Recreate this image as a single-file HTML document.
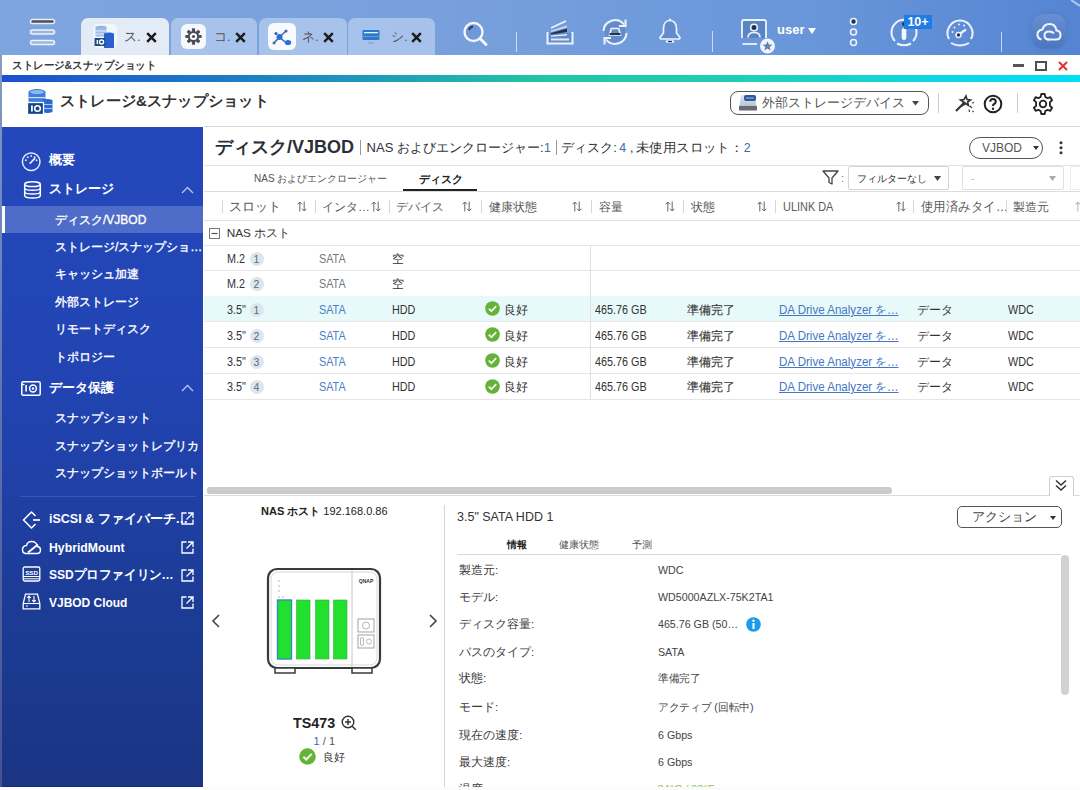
<!DOCTYPE html>
<html><head><meta charset="utf-8">
<style>
*{box-sizing:border-box}
html,body{margin:0;padding:0}
body{width:1080px;height:790px;overflow:hidden;position:relative;background:#fff;font-family:"Liberation Sans",sans-serif;color:#333}
.a{position:absolute}
.t{position:absolute;white-space:nowrap;line-height:20px;height:20px;transform-origin:0 50%}
#top{left:0;top:0;width:1080px;height:55px;background:linear-gradient(90deg,#7ea5df 0%,#78a0dc 40%,#6996da 75%,#5585d2 100%)}
.tab{position:absolute;top:18px;height:37px;border-radius:7px 7px 0 0;background:rgba(205,222,245,.55)}
.tab.act{background:#e3ebf6}
.tab .lb{position:absolute;top:9px;font-size:13px;line-height:20px;color:#555}
.tab .x{position:absolute;top:14px;width:11px;height:11px}
#wt{left:0;top:55px;width:1080px;height:20px;background:#fff}
#gl{left:0;top:75px;width:1080px;height:7px;background:linear-gradient(90deg,#1b4fd0 0%,#1d8fc0 30%,#22c4a4 50%,#1fcfb8 70%,#0ad8ec 90%,#02def2 100%)}
#ah{left:0;top:82px;width:1080px;height:45px;background:#fff}
#lb{left:0;top:55px;width:2px;height:732px;background:linear-gradient(180deg,#8a9cc0 0%,#7090c0 15%,#5a6aa8 60%,#4a5090 100%)}
#sb{left:2px;top:127px;width:201px;height:660px;background:linear-gradient(180deg,#2448bc 0%,#2244b2 40%,#1c3b94 75%,#193583 100%);border-bottom:1.5px solid #172c70}
.si{position:absolute;color:#fff;white-space:nowrap;line-height:20px;height:20px;transform-origin:0 50%}
.sh{font-size:13px;font-weight:bold;left:47px}
.ss{font-size:12px;left:53px;-webkit-text-stroke:0.35px #fff}
.chev{position:absolute;left:179px;width:13px;height:8px}
.ext{position:absolute;left:179px;width:13px;height:13px}
.vs{position:absolute;width:1px;background:#d6d6d6}
.hl{position:absolute;height:1px;background:#e6e6e6}
.bdg{position:absolute;width:14px;height:14px;border-radius:7px;background:#dbe6ef;color:#5a6a7a;font-size:10.5px;text-align:center;line-height:14px}
.lnk{text-decoration:underline}
</style></head><body>
<!-- TOP BAR -->
<div id="top" class="a">
  <svg class="a" style="left:28px;top:17px" width="29" height="30" viewBox="0 0 29 30">
    <rect x="2.5" y="2.5" width="24" height="4" rx="2" fill="#4a4f5a" stroke="#e8eef8" stroke-width="1.5"/>
    <rect x="2.5" y="13" width="24" height="4" rx="2" fill="#9fb6d8" stroke="#eef3fa" stroke-width="1.5"/>
    <rect x="2.5" y="23.5" width="24" height="4" rx="2" fill="#9fb6d8" stroke="#eef3fa" stroke-width="1.5"/>
  </svg>
  <div class="tab act" style="left:81px;width:88px">
    <svg class="a" style="left:12px;top:6px" width="24" height="24" viewBox="0 0 24 24">
      <rect x="0" y="0" width="24" height="24" rx="5" fill="#f2f5fa"/>
      <ellipse cx="8" cy="3.5" rx="5.5" ry="1.8" fill="#8fb0e0"/>
      <rect x="2.5" y="3.5" width="11" height="9" fill="#9cbbe6"/>
      <rect x="2.5" y="6.5" width="11" height="1" fill="#e6eefa"/>
      <rect x="2.5" y="9.5" width="11" height="1" fill="#e6eefa"/>
      <path d="M11 9.5 Q16 7.5 21 9.5 V25 H11Z" fill="#2a60cf"/>
      <rect x="1.5" y="14" width="11" height="8" fill="#1b4f8c"/>
      <rect x="3.6" y="16" width="1.5" height="4" fill="#fff"/>
      <circle cx="8.6" cy="18" r="2" fill="none" stroke="#fff" stroke-width="1.4"/>
    </svg>
    <div class="lb" style="left:43px">ス.</div>
    <svg class="x" style="left:65px" viewBox="0 0 11 11"><path d="M1.2 1.2L9.8 9.8M9.8 1.2L1.2 9.8" stroke="#1a1a1a" stroke-width="2.5"/></svg>
  </div>
  <div class="tab" style="left:171px;width:86px">
    <svg class="a" style="left:10px;top:6px" width="25" height="25" viewBox="0 0 25 25">
      <rect x="0" y="0" width="25" height="25" rx="6" fill="#f6f8fb"/>
      <g transform="translate(12.5 12.5)" fill="#4a4d55">
        <circle r="5.6"/>
        <rect x="-1.6" y="-8.2" width="3.2" height="16.4" rx="0.8"/>
        <rect x="-1.6" y="-8.2" width="3.2" height="16.4" rx="0.8" transform="rotate(45)"/>
        <rect x="-1.6" y="-8.2" width="3.2" height="16.4" rx="0.8" transform="rotate(90)"/>
        <rect x="-1.6" y="-8.2" width="3.2" height="16.4" rx="0.8" transform="rotate(135)"/>
      </g>
      <circle cx="12.5" cy="12.5" r="3.6" fill="#fff"/>
      <circle cx="12.5" cy="12.5" r="1.6" fill="#4a4d55"/>
    </svg>
    <div class="lb" style="left:43px">コ.</div>
    <svg class="x" style="left:64px" viewBox="0 0 11 11"><path d="M1.2 1.2L9.8 9.8M9.8 1.2L1.2 9.8" stroke="#1a1a1a" stroke-width="2.5"/></svg>
  </div>
  <div class="tab" style="left:259px;width:88px">
    <svg class="a" style="left:9px;top:5px" width="28" height="27" viewBox="0 0 28 27">
      <rect x="0" y="0" width="28" height="27" rx="6" fill="#f8fafd"/>
      <path d="M6 20L11.5 14L18 8M11.5 14L17 19" stroke="#3f6bb8" stroke-width="1.6"/>
      <circle cx="11.5" cy="14" r="3" fill="#2a6fd8"/>
      <circle cx="6" cy="20" r="1.5" fill="#4b6ea8"/>
      <circle cx="18" cy="8" r="1.6" fill="#4b6ea8"/>
      <circle cx="8" cy="10.5" r="1.5" fill="#2a5fb8"/>
      <ellipse cx="20" cy="19.5" rx="3.2" ry="2.6" fill="#2a6fd8"/>
    </svg>
    <div class="lb" style="left:43px">ネ.</div>
    <svg class="x" style="left:64px" viewBox="0 0 11 11"><path d="M1.2 1.2L9.8 9.8M9.8 1.2L1.2 9.8" stroke="#1a1a1a" stroke-width="2.5"/></svg>
  </div>
  <div class="tab" style="left:348px;width:87px">
    <svg class="a" style="left:14px;top:11px" width="18" height="16" viewBox="0 0 18 16">
      <rect x="0.5" y="1" width="17" height="10" rx="1" fill="#2f78c8"/>
      <rect x="2" y="3" width="14" height="1.3" fill="#d8f4ff"/>
      <rect x="1" y="7" width="16" height="1" fill="#5aa0e0"/>
      <rect x="6" y="13.5" width="6" height="1" fill="#8a9ab0"/>
    </svg>
    <div class="lb" style="left:43px">シ.</div>
    <svg class="x" style="left:63px" viewBox="0 0 11 11"><path d="M1.2 1.2L9.8 9.8M9.8 1.2L1.2 9.8" stroke="#1a1a1a" stroke-width="2.5"/></svg>
  </div>
  <!-- search -->
  <svg class="a" style="left:462px;top:21px" width="27" height="26" viewBox="0 0 27 26">
    <circle cx="11.5" cy="11" r="9" fill="#6f98d8" stroke="#f4f7fc" stroke-width="2.4"/>
    <path d="M7 9 A5 5 0 0 1 11 5.5" stroke="#2c3e60" stroke-width="2" fill="none"/>
    <path d="M18 17.5L24 23.5" stroke="#f4f7fc" stroke-width="3" stroke-linecap="round"/>
  </svg>
  <div class="a" style="left:516px;top:32px;width:1px;height:20px;background:rgba(235,242,252,.75)"></div>
  <!-- stack -->
  <svg class="a" style="left:545px;top:17px" width="30" height="29" viewBox="0 0 30 29">
    <rect x="3.5" y="16" width="23" height="10" fill="rgba(50,80,130,.22)"/>
    <path d="M2.5 15V26.5H27.5V15" stroke="#eef3fb" stroke-width="2" fill="none"/>
    <rect x="6" y="21.5" width="18" height="2" fill="#dfe8f6"/>
    <path d="M6 11L21 4" stroke="#eef3fb" stroke-width="1.8"/>
    <path d="M6 13.5L22 8.5V10.5L6 15Z" fill="#c9d6ea"/>
    <path d="M6 16L22 11.5V15L6 17.5Z" fill="#243152"/>
    <path d="M6 18.5L22 17V18.6L6 19.8Z" fill="#e8eef8"/>
  </svg>
  <!-- sync -->
  <svg class="a" style="left:599px;top:16px" width="32" height="32" viewBox="0 0 32 32">
    <circle cx="16" cy="16" r="10.5" fill="rgba(40,70,130,.18)"/>
    <path d="M4.5 15A11.5 11.5 0 0 1 25 8.5" stroke="#eef3fb" stroke-width="2" fill="none"/>
    <path d="M26.5 3.5V10H20" stroke="#eef3fb" stroke-width="2" fill="none"/>
    <path d="M27.5 17A11.5 11.5 0 0 1 7 23.5" stroke="#eef3fb" stroke-width="2" fill="none"/>
    <path d="M5.5 28.5V22H12" stroke="#eef3fb" stroke-width="2" fill="none"/>
    <path d="M10.5 19L12.3 12.5H19.7L21.5 19Z" fill="none" stroke="#eef3fb" stroke-width="1.7"/>
    <rect x="10.5" y="17" width="11" height="2" fill="#26324e"/>
  </svg>
  <!-- bell -->
  <svg class="a" style="left:657px;top:17px" width="26" height="28" viewBox="0 0 26 28">
    <path d="M13 3.5C8.5 3.5 6.5 7.5 6.5 11.5V16L3 20.5Q3 22 5 22H21Q23 22 23 20.5L19.5 16V11.5C19.5 7.5 17.5 3.5 13 3.5Z" fill="rgba(50,80,140,.18)" stroke="#eef3fb" stroke-width="1.7"/>
    <circle cx="13" cy="2.8" r="1.2" fill="#eef3fb"/>
    <path d="M10 24.5H16" stroke="#eef3fb" stroke-width="2.6" stroke-linecap="round"/>
    <path d="M11 24.5H15" stroke="#243152" stroke-width="1.2"/>
  </svg>
  <div class="a" style="left:712px;top:31px;width:1px;height:21px;background:rgba(235,242,252,.75)"></div>
  <!-- user -->
  <svg class="a" style="left:740px;top:18px" width="38" height="38" viewBox="0 0 38 38">
    <path d="M2 20V4Q2 2 4 2H24Q26 2 26 4V20" fill="rgba(40,70,130,.25)" stroke="#eef3fb" stroke-width="1.8"/>
    <circle cx="14" cy="9.5" r="3.3" fill="#243152" stroke="#eef3fb" stroke-width="1.6"/>
    <path d="M8 19.5Q8 14.5 14 14.5Q20 14.5 20 19.5" fill="none" stroke="#eef3fb" stroke-width="1.7"/>
    <path d="M2.5 26H17" stroke="#eef3fb" stroke-width="1.8"/>
    <circle cx="27.5" cy="28" r="7.5" fill="#f0f4fb"/>
    <path d="M27.5 23.2L28.9 26.5L32.4 26.7L29.7 29L30.6 32.4L27.5 30.5L24.4 32.4L25.3 29L22.6 26.7L26.1 26.5Z" fill="#5f7fb5"/>
  </svg>
  <div class="t" style="left:777px;top:20px;font-size:13px;font-weight:bold;color:#fff">user</div>
  <svg class="a" style="left:808px;top:28px" width="8" height="6" viewBox="0 0 8 6"><path d="M0 0H8L4 6Z" fill="#fff"/></svg>
  <!-- kebab -->
  <svg class="a" style="left:848px;top:17px" width="11" height="30" viewBox="0 0 11 30">
    <circle cx="5.5" cy="4.5" r="3" fill="#27324a" stroke="#eef3fb" stroke-width="1.6"/>
    <circle cx="5.5" cy="15" r="3" fill="none" stroke="#eef3fb" stroke-width="1.6"/>
    <circle cx="5.5" cy="25.5" r="3" fill="none" stroke="#eef3fb" stroke-width="1.6"/>
  </svg>
  <!-- info gauge -->
  <svg class="a" style="left:889px;top:16px" width="30" height="31" viewBox="0 0 30 31">
    <path d="M6 25A12.5 12.5 0 1 1 24 25" stroke="#eef3fb" stroke-width="2" fill="none"/>
    <path d="M8 27.5Q15 31 22 27.5" stroke="#eef3fb" stroke-width="2" fill="none"/>
    <rect x="12.7" y="12" width="4.6" height="12" rx="2.3" fill="#f4f7fc"/>
    <circle cx="15" cy="8" r="2" fill="#243152"/>
  </svg>
  <div class="a" style="left:904px;top:15px;width:28px;height:14px;background:#1f7be6;color:#fff;font-size:12.5px;font-weight:bold;line-height:14px;text-align:center">10+</div>
  <!-- speedometer -->
  <svg class="a" style="left:944px;top:17px" width="32" height="30" viewBox="0 0 32 30">
    <path d="M5 22A12.5 12.5 0 1 1 27 22" stroke="#eef3fb" stroke-width="2" fill="none"/>
    <path d="M7 26Q16 31 25 26" stroke="#eef3fb" stroke-width="2" fill="none"/>
    <g fill="#eef3fb"><circle cx="8.5" cy="15" r="1"/><circle cx="10.5" cy="10.5" r="1"/><circle cx="15" cy="7.5" r="1"/><circle cx="20" cy="8.5" r="1"/></g>
    <path d="M14 18L22 12.5" stroke="#eef3fb" stroke-width="2.2"/>
    <circle cx="14.5" cy="18" r="2.4" fill="#243152" stroke="#eef3fb" stroke-width="1.5"/>
  </svg>
  <div class="a" style="left:1001px;top:32px;width:1px;height:20px;background:rgba(235,242,252,.75)"></div>
  <!-- cloud -->
  <div class="a" style="left:1032px;top:14px;width:34px;height:35px;border-radius:12px;background:linear-gradient(180deg,#6890d2,#4b76c0);box-shadow:0 0 4px 1px rgba(80,120,190,.6)"></div>
  <svg class="a" style="left:1035px;top:21px" width="28" height="22" viewBox="0 0 28 22">
    <path d="M12 18.5H21Q25.5 18.5 25.5 14Q25.5 10 21.5 9.5Q20.5 3 14.5 3Q9 3 7.5 8.5Q2.5 9.5 2.5 13.5Q2.5 17.5 6.5 18.5" fill="none" stroke="#f2f6fc" stroke-width="2"/>
    <path d="M19 12.5Q17.5 10.5 14 10.5Q9.5 10.5 9.5 14.5Q9.5 18.5 14 18.5" fill="none" stroke="#f2f6fc" stroke-width="2"/>
  </svg>
  <svg class="a" style="left:1068px;top:0px" width="12" height="10" viewBox="0 0 12 10"><path d="M3 0L12 6" stroke="rgba(255,255,255,.55)" stroke-width="2"/></svg>
</div>

<!-- WINDOW TITLE -->
<div id="wt" class="a">
  <div class="t" style="left:12px;top:0px;font-size:11px;font-weight:bold;color:#3a3a3a;transform:scaleX(0.956)">ストレージ&amp;スナップショット</div>
  <div class="a" style="left:1013px;top:9px;width:11px;height:2.5px;background:#555"></div>
  <div class="a" style="left:1035px;top:6px;width:12px;height:10px;border:2.3px solid #505050"></div>
  <svg class="a" style="left:1058px;top:6px" width="10" height="10" viewBox="0 0 10 10"><path d="M1 1L9 9M9 1L1 9" stroke="#e0322c" stroke-width="2"/></svg>
</div>
<div id="gl" class="a"></div>

<!-- APP HEADER -->
<div id="ah" class="a">
  <svg class="a" style="left:26px;top:6px" width="28" height="27" viewBox="0 0 28 27">
    <ellipse cx="11" cy="4" rx="8.5" ry="3" fill="#3a78d8"/>
    <rect x="2.5" y="4" width="17" height="13" fill="#3f7edc"/>
    <ellipse cx="11" cy="4" rx="7" ry="2" fill="#8bb8f0"/>
    <rect x="2.5" y="9" width="17" height="1.2" fill="#cfe2fa"/>
    <path d="M16 12Q21 10 26.5 12V24Q21 26 16 24Z" fill="#2c6ad2"/>
    <rect x="16" y="16" width="10.5" height="1" fill="#a8c8f2"/>
    <rect x="16" y="20" width="10.5" height="1" fill="#a8c8f2"/>
    <rect x="1.5" y="14.5" width="16" height="12" fill="#17468c" stroke="#fff" stroke-width="1.3"/>
    <rect x="5" y="17.5" width="1.8" height="6" fill="#fff"/>
    <circle cx="11.5" cy="20.5" r="2.8" fill="none" stroke="#fff" stroke-width="1.6"/>
  </svg>
  <div class="t" style="left:60px;top:8px;height:22px;line-height:22px;font-size:15px;font-weight:bold;color:#333;transform:scaleX(1.014)">ストレージ&amp;スナップショット</div>
  <div class="a" style="left:730px;top:9px;width:199px;height:24px;border:1px solid #555;border-radius:8px"></div>
  <svg class="a" style="left:738px;top:12px" width="20" height="18" viewBox="0 0 20 18">
    <defs><linearGradient id="eg" x1="0" y1="0" x2="0" y2="1"><stop offset="0" stop-color="#dfe8f2"/><stop offset="1" stop-color="#b8c4d2"/></linearGradient></defs>
    <path d="M3 1H17L18.5 12H1.5Z" fill="url(#eg)"/>
    <rect x="6" y="1" width="12" height="6" rx="2" fill="#2a5a9a"/>
    <path d="M8 4H16" stroke="#9fc0e8" stroke-width="1"/>
    <rect x="1" y="12" width="18" height="4.5" fill="#6a6a70"/>
  </svg>
  <div class="t" style="left:762px;top:10.5px;font-size:13px;color:#555">外部ストレージデバイス</div>
  <svg class="a" style="left:912px;top:19px" width="7" height="4.5" viewBox="0 0 8 5"><path d="M0 0H8L4 5Z" fill="#444"/></svg>
  <div class="a" style="left:938px;top:11px;width:1px;height:20px;background:#ccc"></div>
  <svg class="a" style="left:953px;top:12px" width="22" height="20" viewBox="0 0 22 20">
    <path d="M3 17L12 8" stroke="#333" stroke-width="2.2"/>
    <path d="M13 2L14 5.5L17.5 6L14.5 8L15.5 11.5L12.5 9.5L9.5 11.5L10.5 8L7.5 6L11 5.5Z" fill="none" stroke="#333" stroke-width="1.6"/>
    <path d="M17 12L19 14M19 9L21 8.5M16 15.5L16.5 18M19.5 17L20.5 18" stroke="#333" stroke-width="1.2"/>
  </svg>
  <svg class="a" style="left:983px;top:12px" width="20" height="20" viewBox="0 0 20 20">
    <circle cx="10" cy="10" r="8.3" fill="none" stroke="#222" stroke-width="2"/>
    <path d="M7.2 7.8Q7.2 5 10 5Q12.8 5 12.8 7.5Q12.8 9.2 10.9 10.2Q10 10.7 10 12" fill="none" stroke="#222" stroke-width="2"/>
    <circle cx="10" cy="14.8" r="1.2" fill="#222"/>
  </svg>
  <div class="a" style="left:1017px;top:11px;width:1px;height:20px;background:#ccc"></div>
  <svg class="a" style="left:1031px;top:10px" width="24" height="24" viewBox="0 0 24 24">
    <path d="M10.3 2H13.7L14.3 4.9L16.6 6.2L19.4 5.2L21.1 8.2L18.9 10.1V13.9L21.1 15.8L19.4 18.8L16.6 17.8L14.3 19.1L13.7 22H10.3L9.7 19.1L7.4 17.8L4.6 18.8L2.9 15.8L5.1 13.9V10.1L2.9 8.2L4.6 5.2L7.4 6.2L9.7 4.9Z" fill="none" stroke="#222" stroke-width="1.8" stroke-linejoin="round"/>
    <circle cx="12" cy="12" r="3.3" fill="none" stroke="#222" stroke-width="1.8"/>
  </svg>
</div>
<div id="lb" class="a"></div>
<div id="sb" class="a">
  <!-- gauge icon -->
  <svg class="a" style="left:18px;top:24px" width="22" height="22" viewBox="0 0 22 22">
    <circle cx="11.2" cy="10.8" r="8.8" fill="none" stroke="#e4ebff" stroke-width="1.5"/>
    <g fill="#e4ebff"><circle cx="5.8" cy="9.3" r=".95"/><circle cx="7.8" cy="6.2" r=".95"/><circle cx="11.2" cy="5" r=".95"/><circle cx="14.6" cy="6.2" r=".95"/><circle cx="16.6" cy="9.3" r=".95"/></g>
    <path d="M10.2 12.2L14.6 7.6" stroke="#e4ebff" stroke-width="1.7" stroke-linecap="round"/>
  </svg>
  <div class="si sh" style="top:23px">概要</div>
  <!-- db icon -->
  <svg class="a" style="left:21px;top:54px" width="19" height="18" viewBox="0 0 19 18">
    <ellipse cx="9.5" cy="3.2" rx="7.8" ry="2.4" fill="none" stroke="#fff" stroke-width="1.5"/>
    <path d="M1.7 3.2V14.5Q1.7 17 9.5 17Q17.3 17 17.3 14.5V3.2" fill="none" stroke="#fff" stroke-width="1.5"/>
    <path d="M1.7 7Q1.7 9.3 9.5 9.3Q17.3 9.3 17.3 7M1.7 10.8Q1.7 13.1 9.5 13.1Q17.3 13.1 17.3 10.8" fill="none" stroke="#fff" stroke-width="1.5"/>
  </svg>
  <div class="si sh" style="top:52px">ストレージ</div>
  <svg class="chev" style="top:59px" viewBox="0 0 13 8"><path d="M1 7L6.5 1.5L12 7" fill="none" stroke="#b8c6ea" stroke-width="1.3"/></svg>
  <div class="a" style="left:0;top:79px;width:201px;height:27px;background:#4f6dc8"></div>
  <div class="a" style="left:0;top:79px;width:2.5px;height:27px;background:#fff"></div>
  <div class="si ss" style="top:82.5px">ディスク/VJBOD</div>
  <div class="si ss" style="top:109.5px">ストレージ/スナップショ…</div>
  <div class="si ss" style="top:137px">キャッシュ加速</div>
  <div class="si ss" style="top:165px">外部ストレージ</div>
  <div class="si ss" style="top:192px">リモートディスク</div>
  <div class="si ss" style="top:220px">トポロジー</div>
  <!-- snapshot icon -->
  <svg class="a" style="left:19px;top:253px" width="20" height="16" viewBox="0 0 20 16">
    <rect x="0.8" y="1.8" width="18.4" height="13.4" rx="1.5" fill="none" stroke="#fff" stroke-width="1.5"/>
    <path d="M0.8 4.5H3.5" stroke="#fff" stroke-width="1.3"/>
    <rect x="4.3" y="5" width="1.6" height="6.5" fill="#fff"/>
    <circle cx="12" cy="8.5" r="3.4" fill="none" stroke="#fff" stroke-width="1.5"/>
    <circle cx="12" cy="8.5" r="1.2" fill="#fff"/>
  </svg>
  <div class="si sh" style="top:251px">データ保護</div>
  <svg class="chev" style="top:257px" viewBox="0 0 13 8"><path d="M1 7L6.5 1.5L12 7" fill="none" stroke="#b8c6ea" stroke-width="1.3"/></svg>
  <div class="si ss" style="top:280.5px">スナップショット</div>
  <div class="si ss" style="top:308.5px">スナップショットレプリカ</div>
  <div class="si ss" style="top:336px">スナップショットボールト</div>
  <div class="a" style="left:18px;top:369px;width:176px;height:1px;background:#3b58b0"></div>
  <!-- iscsi -->
  <svg class="a" style="left:20px;top:384px" width="20" height="18" viewBox="0 0 20 18">
    <path d="M13.5 5L9.5 1L1.5 9L9.5 17L13.5 13" fill="none" stroke="#fff" stroke-width="1.6" stroke-linejoin="round"/>
    <path d="M11 9H18" stroke="#fff" stroke-width="1.7"/>
  </svg>
  <div class="si sh" style="top:382px;font-size:12.5px">iSCSI &amp; ファイバーチ…</div>
  <svg class="ext" style="top:385px" viewBox="0 0 13 13"><path d="M5.5 1H1V12H12V7.5" fill="none" stroke="#fff" stroke-width="1.3"/><path d="M7 1H12V6M12 1L5.5 7.5" fill="none" stroke="#fff" stroke-width="1.3"/></svg>
  <!-- hybrid -->
  <svg class="a" style="left:19px;top:413px" width="21" height="15" viewBox="0 0 21 15">
    <path d="M5 13.5H16Q19.5 13.5 19.5 10Q19.5 7 16.5 6.5Q15.5 1.5 10.5 1.5Q6.5 1.5 5.5 5.5Q1.5 6 1.5 9.5Q1.5 13.5 5 13.5Z" fill="none" stroke="#fff" stroke-width="1.4"/>
    <path d="M7 12.5L17 4.5" stroke="#fff" stroke-width="2"/>
  </svg>
  <div class="si sh" style="top:410.5px;font-size:12.5px;transform:scaleX(0.981)">HybridMount</div>
  <svg class="ext" style="top:414px" viewBox="0 0 13 13"><path d="M5.5 1H1V12H12V7.5" fill="none" stroke="#fff" stroke-width="1.3"/><path d="M7 1H12V6M12 1L5.5 7.5" fill="none" stroke="#fff" stroke-width="1.3"/></svg>
  <!-- ssd -->
  <svg class="a" style="left:20px;top:439px" width="19" height="16" viewBox="0 0 19 16">
    <rect x="1.2" y="1" width="16.6" height="14" rx="1.5" fill="none" stroke="#fff" stroke-width="1.3"/>
    <path d="M1.2 10.5H17.8M1.2 12.8H17.8" stroke="#fff" stroke-width="1"/>
    <text x="9.5" y="8.6" font-size="6.2" font-family="Liberation Sans" font-weight="bold" fill="#fff" text-anchor="middle">SSD</text>
  </svg>
  <div class="si sh" style="top:438px;font-size:12.5px;transform:scaleX(0.965)">SSDプロファイリン…</div>
  <svg class="ext" style="top:442px" viewBox="0 0 13 13"><path d="M5.5 1H1V12H12V7.5" fill="none" stroke="#fff" stroke-width="1.3"/><path d="M7 1H12V6M12 1L5.5 7.5" fill="none" stroke="#fff" stroke-width="1.3"/></svg>
  <!-- vjbod cloud -->
  <svg class="a" style="left:20px;top:466px" width="19" height="17" viewBox="0 0 19 17">
    <path d="M3.5 1.2H15.5L17.8 10.5V15.8H1.2V10.5Z" fill="none" stroke="#fff" stroke-width="1.3"/>
    <path d="M1.2 10.5H17.8" stroke="#fff" stroke-width="1.1"/>
    <path d="M7 9V3M5.2 4.8L7 3L8.8 4.8M12 3V9M10.2 7.2L12 9L13.8 7.2" fill="none" stroke="#fff" stroke-width="1.1"/>
    <path d="M4 13H6" stroke="#fff" stroke-width="1"/>
  </svg>
  <div class="si sh" style="top:465.5px;font-size:12.5px;transform:scaleX(0.957)">VJBOD Cloud</div>
  <svg class="ext" style="top:469px" viewBox="0 0 13 13"><path d="M5.5 1H1V12H12V7.5" fill="none" stroke="#fff" stroke-width="1.3"/><path d="M7 1H12V6M12 1L5.5 7.5" fill="none" stroke="#fff" stroke-width="1.3"/></svg>
</div>


<!-- MAIN -->

<div class="a" style="left:204px;top:127px;width:876px;height:660px;background:#fff"></div>
<div class="a" style="left:204px;top:126px;width:876px;height:1px;background:#d6d6d6"></div>
<div class="t" style="left:215px;top:136.75px;font-size:18px;color:#2b2f38;font-weight:bold">ディスク/VJBOD</div>
<div class="a" style="left:360px;top:140px;width:1px;height:15px;background:#999"></div>
<div class="t" style="left:366.6px;top:138.00px;font-size:13px;color:#333">NAS およびエンクロージャー:</div>
<div class="t" style="left:544px;top:138.00px;font-size:12.3px;color:#3a6aa8">1</div>
<div class="a" style="left:555.5px;top:140px;width:1px;height:15px;background:#999"></div>
<div class="t" style="left:561.2px;top:138.00px;font-size:13px;color:#333">ディスク:</div>
<div class="t" style="left:619.3px;top:138.00px;font-size:12.3px;color:#3a6aa8">4</div>
<div class="t" style="left:630px;top:138.00px;font-size:12.3px;color:#333">,</div>
<div class="t" style="left:636.3px;top:138.00px;font-size:13px;color:#333;transform:scaleX(1.03)">未使用スロット：</div>
<div class="t" style="left:743.7px;top:138.00px;font-size:12.3px;color:#3a6aa8">2</div>
<div class="a" style="left:969px;top:137px;width:74px;height:21.5px;border:1px solid #555;border-radius:11px"></div>
<div class="t" style="left:981.5px;top:137.50px;font-size:12.5px;color:#555;transform:scaleX(0.96)">VJBOD</div>
<svg class="a" style="left:1032.5px;top:146px" width="6" height="4" viewBox="0 0 6 4"><path d="M0 0H6L3 4Z" fill="#333"/></svg>
<svg class="a" style="left:1058.5px;top:140px" width="4" height="16" viewBox="0 0 4 16"><circle cx="2" cy="2.8" r="1.5" fill="#333"/><circle cx="2" cy="7.8" r="1.5" fill="#333"/><circle cx="2" cy="12.8" r="1.5" fill="#333"/></svg>
<div class="a" style="left:204px;top:164.5px;width:876px;height:1px;background:#e3e3e3"></div>
<div class="t" style="left:254px;top:169.00px;font-size:10px;color:#555">NAS およびエンクロージャー</div>
<div class="t" style="left:419px;top:169.00px;font-size:11px;color:#222;font-weight:bold">ディスク</div>
<div class="a" style="left:403px;top:189px;width:74px;height:3px;background:#222"></div>
<svg class="a" style="left:822px;top:170px" width="17" height="15" viewBox="0 0 17 15"><path d="M1 1H16L10 8V14L7 12.5V8Z" fill="none" stroke="#444" stroke-width="1.3" stroke-linejoin="round"/></svg>
<div class="t" style="left:841px;top:168.00px;font-size:11px;color:#777">:</div>
<div class="a" style="left:847.5px;top:166px;width:101px;height:24px;border:1px solid #d4d4d4;border-radius:2px"></div>
<div class="t" style="left:857px;top:169.00px;font-size:9.9px;color:#333">フィルターなし</div>
<svg class="a" style="left:934px;top:176px" width="7" height="5" viewBox="0 0 7 5"><path d="M0 0H7L3.5 5Z" fill="#444"/></svg>
<div class="a" style="left:962px;top:166px;width:102px;height:24px;border:1px solid #e0e0e0;border-radius:2px"></div>
<div class="t" style="left:971px;top:168.00px;font-size:11px;color:#bbb">-</div>
<svg class="a" style="left:1049px;top:176px" width="7" height="5" viewBox="0 0 7 5"><path d="M0 0H7L3.5 5Z" fill="#aaa"/></svg>
<div class="a" style="left:1070px;top:166px;width:10px;height:24px;border:1px solid #eee;border-right:none"></div>
<div class="a" style="left:204px;top:191px;width:876px;height:1px;background:#dcdcdc"></div>
<div class="vs" style="left:222px;top:200px;height:13px"></div>
<div class="t" style="left:229px;top:196.50px;font-size:13px;color:#5a5a5a">スロット</div>
<svg class="a" style="left:297px;top:201px" width="10" height="11" viewBox="0 0 10 11"><path d="M2.8 10.5V1M0.6 3.3L2.8 1L5 3.3M7.2 0.5V10M5 7.7L7.2 10L9.4 7.7" fill="none" stroke="#666" stroke-width="1"/></svg>
<div class="vs" style="left:314.5px;top:200px;height:13px"></div>
<div class="t" style="left:322px;top:196.50px;font-size:11.8px;color:#5a5a5a">インタ…</div>
<svg class="a" style="left:371px;top:201px" width="10" height="11" viewBox="0 0 10 11"><path d="M2.8 10.5V1M0.6 3.3L2.8 1L5 3.3M7.2 0.5V10M5 7.7L7.2 10L9.4 7.7" fill="none" stroke="#666" stroke-width="1"/></svg>
<div class="vs" style="left:388.5px;top:200px;height:13px"></div>
<div class="t" style="left:395.5px;top:196.50px;font-size:11.8px;color:#5a5a5a">デバイス</div>
<svg class="a" style="left:462px;top:201px" width="10" height="11" viewBox="0 0 10 11"><path d="M2.8 10.5V1M0.6 3.3L2.8 1L5 3.3M7.2 0.5V10M5 7.7L7.2 10L9.4 7.7" fill="none" stroke="#666" stroke-width="1"/></svg>
<div class="vs" style="left:481px;top:200px;height:13px"></div>
<div class="t" style="left:488.5px;top:196.50px;font-size:11.8px;color:#5a5a5a">健康状態</div>
<svg class="a" style="left:572px;top:201px" width="10" height="11" viewBox="0 0 10 11"><path d="M2.8 10.5V1M0.6 3.3L2.8 1L5 3.3M7.2 0.5V10M5 7.7L7.2 10L9.4 7.7" fill="none" stroke="#666" stroke-width="1"/></svg>
<div class="vs" style="left:591px;top:200px;height:13px"></div>
<div class="t" style="left:598.5px;top:196.50px;font-size:11.8px;color:#5a5a5a">容量</div>
<svg class="a" style="left:665px;top:201px" width="10" height="11" viewBox="0 0 10 11"><path d="M2.8 10.5V1M0.6 3.3L2.8 1L5 3.3M7.2 0.5V10M5 7.7L7.2 10L9.4 7.7" fill="none" stroke="#666" stroke-width="1"/></svg>
<div class="vs" style="left:682.5px;top:200px;height:13px"></div>
<div class="t" style="left:691px;top:196.50px;font-size:11.8px;color:#5a5a5a">状態</div>
<svg class="a" style="left:757px;top:201px" width="10" height="11" viewBox="0 0 10 11"><path d="M2.8 10.5V1M0.6 3.3L2.8 1L5 3.3M7.2 0.5V10M5 7.7L7.2 10L9.4 7.7" fill="none" stroke="#666" stroke-width="1"/></svg>
<div class="vs" style="left:774.5px;top:200px;height:13px"></div>
<div class="t" style="left:783.3px;top:196.50px;font-size:12.5px;color:#5a5a5a;transform:scaleX(0.874)">ULINK DA</div>
<svg class="a" style="left:896px;top:201px" width="10" height="11" viewBox="0 0 10 11"><path d="M2.8 10.5V1M0.6 3.3L2.8 1L5 3.3M7.2 0.5V10M5 7.7L7.2 10L9.4 7.7" fill="none" stroke="#666" stroke-width="1"/></svg>
<div class="vs" style="left:913px;top:200px;height:13px"></div>
<div class="t" style="left:921px;top:196.50px;font-size:12.5px;color:#5a5a5a;transform:scaleX(0.96)">使用済みタイ…</div>
<div class="vs" style="left:1005.5px;top:200px;height:13px"></div>
<div class="t" style="left:1013.3px;top:196.50px;font-size:11.8px;color:#5a5a5a">製造元</div>
<svg class="a" style="left:1075px;top:201px" width="5" height="11" viewBox="0 0 5 11"><path d="M2.8 10.5V1M0.6 3.3L2.8 1L5 3.3" fill="none" stroke="#bbb" stroke-width="1.1"/></svg>
<div class="a" style="left:204px;top:219.5px;width:876px;height:1px;background:#dedede"></div>
<svg class="a" style="left:208.5px;top:227.5px" width="11" height="11" viewBox="0 0 11 11"><rect x="0.5" y="0.5" width="10" height="10" fill="none" stroke="#777" stroke-width="1"/><path d="M2.5 5.5H8.5" stroke="#555" stroke-width="1.2"/></svg>
<div class="t" style="left:226.7px;top:223.00px;font-size:11.75px;color:#333">NAS ホスト</div>
<div class="a" style="left:204px;top:244.5px;width:876px;height:1px;background:#e6e6e6"></div>
<div class="t" style="left:226.5px;top:248.95px;font-size:12px;color:#333;transform:scaleX(0.9)">M.2</div>
<div class="bdg" style="left:249.5px;top:251.95px">1</div>
<div class="t" style="left:318.5px;top:248.95px;font-size:12px;color:#777;transform:scaleX(0.9)">SATA</div>
<div class="t" style="left:391.5px;top:248.95px;font-size:12px;color:#333">空</div>
<div class="a" style="left:204px;top:270.0px;width:876px;height:1px;background:#e6e6e6"></div>
<div class="t" style="left:226.5px;top:274.45px;font-size:12px;color:#333;transform:scaleX(0.9)">M.2</div>
<div class="bdg" style="left:249.5px;top:277.45px">2</div>
<div class="t" style="left:318.5px;top:274.45px;font-size:12px;color:#777;transform:scaleX(0.9)">SATA</div>
<div class="t" style="left:391.5px;top:274.45px;font-size:12px;color:#333">空</div>
<div class="a" style="left:204px;top:295.5px;width:876px;height:1px;background:#e6e6e6"></div>
<div class="a" style="left:204px;top:296px;width:876px;height:25.5px;background:#e8f9fa"></div>
<div class="t" style="left:226.5px;top:299.95px;font-size:12px;color:#333;transform:scaleX(0.9)">3.5"</div>
<div class="bdg" style="left:249.5px;top:302.95px">1</div>
<div class="t" style="left:318.5px;top:299.95px;font-size:12px;color:#4a80c4;transform:scaleX(0.9)">SATA</div>
<div class="t" style="left:391.5px;top:299.95px;font-size:12px;color:#333;transform:scaleX(0.9)">HDD</div>
<svg class="a" style="left:484.5px;top:301.34999999999997px" width="15" height="15" viewBox="0 0 15 15"><circle cx="7.5" cy="7.5" r="7.3" fill="#64b23a"/><path d="M3.8 7.6L6.4 10.2L11.2 5.2" fill="none" stroke="#eefae4" stroke-width="1.8"/></svg>
<div class="t" style="left:504px;top:299.95px;font-size:12px;color:#333">良好</div>
<div class="t" style="left:594.5px;top:299.95px;font-size:12px;color:#333;transform:scaleX(0.9)">465.76 GB</div>
<div class="t" style="left:686.5px;top:299.95px;font-size:12px;color:#333;-webkit-text-stroke:0.12px #333">準備完了</div>
<div class="t" style="left:779px;top:299.95px;font-size:12px;color:#4677c4;transform:scaleX(0.964);text-decoration:underline">DA Drive Analyzer を…</div>
<div class="t" style="left:916.5px;top:299.95px;font-size:12px;color:#333">データ</div>
<div class="t" style="left:1008px;top:299.95px;font-size:12px;color:#333;transform:scaleX(0.9)">WDC</div>
<div class="a" style="left:204px;top:321.0px;width:876px;height:1px;background:#e6e6e6"></div>
<div class="t" style="left:226.5px;top:325.70px;font-size:12px;color:#333;transform:scaleX(0.9)">3.5"</div>
<div class="bdg" style="left:249.5px;top:328.7px">2</div>
<div class="t" style="left:318.5px;top:325.70px;font-size:12px;color:#4a80c4;transform:scaleX(0.9)">SATA</div>
<div class="t" style="left:391.5px;top:325.70px;font-size:12px;color:#333;transform:scaleX(0.9)">HDD</div>
<svg class="a" style="left:484.5px;top:327.09999999999997px" width="15" height="15" viewBox="0 0 15 15"><circle cx="7.5" cy="7.5" r="7.3" fill="#64b23a"/><path d="M3.8 7.6L6.4 10.2L11.2 5.2" fill="none" stroke="#eefae4" stroke-width="1.8"/></svg>
<div class="t" style="left:504px;top:325.70px;font-size:12px;color:#333">良好</div>
<div class="t" style="left:594.5px;top:325.70px;font-size:12px;color:#333;transform:scaleX(0.9)">465.76 GB</div>
<div class="t" style="left:686.5px;top:325.70px;font-size:12px;color:#333;-webkit-text-stroke:0.12px #333">準備完了</div>
<div class="t" style="left:779px;top:325.70px;font-size:12px;color:#4677c4;transform:scaleX(0.964);text-decoration:underline">DA Drive Analyzer を…</div>
<div class="t" style="left:916.5px;top:325.70px;font-size:12px;color:#333">データ</div>
<div class="t" style="left:1008px;top:325.70px;font-size:12px;color:#333;transform:scaleX(0.9)">WDC</div>
<div class="a" style="left:204px;top:347.0px;width:876px;height:1px;background:#e6e6e6"></div>
<div class="t" style="left:226.5px;top:351.70px;font-size:12px;color:#333;transform:scaleX(0.9)">3.5"</div>
<div class="bdg" style="left:249.5px;top:354.7px">3</div>
<div class="t" style="left:318.5px;top:351.70px;font-size:12px;color:#4a80c4;transform:scaleX(0.9)">SATA</div>
<div class="t" style="left:391.5px;top:351.70px;font-size:12px;color:#333;transform:scaleX(0.9)">HDD</div>
<svg class="a" style="left:484.5px;top:353.09999999999997px" width="15" height="15" viewBox="0 0 15 15"><circle cx="7.5" cy="7.5" r="7.3" fill="#64b23a"/><path d="M3.8 7.6L6.4 10.2L11.2 5.2" fill="none" stroke="#eefae4" stroke-width="1.8"/></svg>
<div class="t" style="left:504px;top:351.70px;font-size:12px;color:#333">良好</div>
<div class="t" style="left:594.5px;top:351.70px;font-size:12px;color:#333;transform:scaleX(0.9)">465.76 GB</div>
<div class="t" style="left:686.5px;top:351.70px;font-size:12px;color:#333;-webkit-text-stroke:0.12px #333">準備完了</div>
<div class="t" style="left:779px;top:351.70px;font-size:12px;color:#4677c4;transform:scaleX(0.964);text-decoration:underline">DA Drive Analyzer を…</div>
<div class="t" style="left:916.5px;top:351.70px;font-size:12px;color:#333">データ</div>
<div class="t" style="left:1008px;top:351.70px;font-size:12px;color:#333;transform:scaleX(0.9)">WDC</div>
<div class="a" style="left:204px;top:373.0px;width:876px;height:1px;background:#e6e6e6"></div>
<div class="t" style="left:226.5px;top:377.45px;font-size:12px;color:#333;transform:scaleX(0.9)">3.5"</div>
<div class="bdg" style="left:249.5px;top:380.45px">4</div>
<div class="t" style="left:318.5px;top:377.45px;font-size:12px;color:#4a80c4;transform:scaleX(0.9)">SATA</div>
<div class="t" style="left:391.5px;top:377.45px;font-size:12px;color:#333;transform:scaleX(0.9)">HDD</div>
<svg class="a" style="left:484.5px;top:378.84999999999997px" width="15" height="15" viewBox="0 0 15 15"><circle cx="7.5" cy="7.5" r="7.3" fill="#64b23a"/><path d="M3.8 7.6L6.4 10.2L11.2 5.2" fill="none" stroke="#eefae4" stroke-width="1.8"/></svg>
<div class="t" style="left:504px;top:377.45px;font-size:12px;color:#333">良好</div>
<div class="t" style="left:594.5px;top:377.45px;font-size:12px;color:#333;transform:scaleX(0.9)">465.76 GB</div>
<div class="t" style="left:686.5px;top:377.45px;font-size:12px;color:#333;-webkit-text-stroke:0.12px #333">準備完了</div>
<div class="t" style="left:779px;top:377.45px;font-size:12px;color:#4677c4;transform:scaleX(0.964);text-decoration:underline">DA Drive Analyzer を…</div>
<div class="t" style="left:916.5px;top:377.45px;font-size:12px;color:#333">データ</div>
<div class="t" style="left:1008px;top:377.45px;font-size:12px;color:#333;transform:scaleX(0.9)">WDC</div>
<div class="a" style="left:204px;top:398.5px;width:876px;height:1px;background:#e6e6e6"></div>
<div class="a" style="left:590px;top:245px;width:1px;height:154px;background:#e0e0e0"></div>
<div class="a" style="left:207px;top:487px;width:685px;height:7px;border-radius:2px 3.5px 3.5px 2px;background:#cbcbcb"></div>
<div class="a" style="left:204px;top:495px;width:876px;height:1px;background:#dcdcdc"></div>
<div class="a" style="left:1048.5px;top:476px;width:25px;height:20px;border:1px solid #cfcfcf;border-bottom:none;border-radius:3px 3px 0 0;background:#fff"></div>
<svg class="a" style="left:1054px;top:479px" width="14" height="13" viewBox="0 0 14 13"><path d="M2 1.5L7 6L12 1.5M2 6.5L7 11L12 6.5" fill="none" stroke="#333" stroke-width="1.5"/></svg>
<div class="t" style="left:261px;top:500.50px;font-size:11px;color:#222"><b>NAS ホスト</b> 192.168.0.86</div>
<div class="a" style="left:444px;top:505px;width:1px;height:285px;background:#d4d4d4"></div>
<div class="t" style="left:457px;top:506.50px;font-size:12.5px;color:#333">3.5" SATA HDD 1</div>
<div class="a" style="left:957px;top:506px;width:105px;height:22px;border:1px solid #555;border-radius:5px"></div>
<div class="t" style="left:972px;top:507.00px;font-size:12.5px;color:#444">アクション</div>
<svg class="a" style="left:1050px;top:516px" width="6" height="4" viewBox="0 0 6 4"><path d="M0 0H6L3 4Z" fill="#333"/></svg>
<div class="t" style="left:506.5px;top:535.00px;font-size:10px;color:#222;font-weight:bold">情報</div>
<div class="t" style="left:559px;top:535.00px;font-size:10px;color:#555">健康状態</div>
<div class="t" style="left:632px;top:535.00px;font-size:10px;color:#555">予測</div>
<div class="a" style="left:457px;top:553.5px;width:604px;height:1px;background:#d8d8d8"></div>
<div class="a" style="left:1061px;top:555px;width:8px;height:140px;border-radius:4px;background:#d2d2d2"></div>
<div class="t" style="left:459px;top:559.80px;font-size:11.6px;color:#3a3a3a">製造元:</div>
<div class="t" style="left:657.5px;top:559.80px;font-size:11px;color:#444;transform:scaleX(0.97)">WDC</div>
<div class="t" style="left:459px;top:587.20px;font-size:11.6px;color:#3a3a3a">モデル:</div>
<div class="t" style="left:657.5px;top:587.20px;font-size:11px;color:#444;transform:scaleX(0.97)">WD5000AZLX-75K2TA1</div>
<div class="t" style="left:459px;top:613.80px;font-size:11.6px;color:#3a3a3a">ディスク容量:</div>
<div class="t" style="left:657.5px;top:613.80px;font-size:11px;color:#444;transform:scaleX(0.97)">465.76 GB (50…</div>
<div class="t" style="left:459px;top:641.60px;font-size:11.6px;color:#3a3a3a">バスのタイプ:</div>
<div class="t" style="left:657.5px;top:641.60px;font-size:11px;color:#444;transform:scaleX(0.97)">SATA</div>
<div class="t" style="left:459px;top:668.20px;font-size:11.6px;color:#3a3a3a">状態:</div>
<div class="t" style="left:657.5px;top:668.20px;font-size:11px;color:#444;transform:scaleX(0.97)">準備完了</div>
<div class="t" style="left:459px;top:696.70px;font-size:11.6px;color:#3a3a3a">モード:</div>
<div class="t" style="left:657.5px;top:696.70px;font-size:11px;color:#444;transform:scaleX(0.97)">アクティブ (回転中)</div>
<div class="t" style="left:459px;top:724.50px;font-size:11.6px;color:#3a3a3a">現在の速度:</div>
<div class="t" style="left:657.5px;top:724.50px;font-size:11px;color:#444;transform:scaleX(0.97)">6 Gbps</div>
<div class="t" style="left:459px;top:751.90px;font-size:11.6px;color:#3a3a3a">最大速度:</div>
<div class="t" style="left:657.5px;top:751.90px;font-size:11px;color:#444;transform:scaleX(0.97)">6 Gbps</div>
<div class="t" style="left:459px;top:779.30px;font-size:11.6px;color:#3a3a3a">温度</div>
<div class="t" style="left:657.5px;top:779.30px;font-size:11px;color:#8bc34a">34°C / 93°F</div>
<svg class="a" style="left:746px;top:616.5px" width="15" height="15" viewBox="0 0 15 15"><circle cx="7.5" cy="7.5" r="7.3" fill="#1e9be8"/><rect x="6.5" y="6" width="2" height="6" fill="#fff"/><circle cx="7.5" cy="3.8" r="1.2" fill="#fff"/></svg>
<svg class="a" style="left:211px;top:614px" width="10" height="14" viewBox="0 0 10 14"><path d="M8 1L2 7L8 13" fill="none" stroke="#444" stroke-width="1.6"/></svg>
<svg class="a" style="left:428px;top:614px" width="10" height="14" viewBox="0 0 10 14"><path d="M2 1L8 7L2 13" fill="none" stroke="#444" stroke-width="1.6"/></svg>
<svg class="a" style="left:266px;top:567px" width="116" height="107" viewBox="0 0 116 107">
  <rect x="2" y="2" width="112" height="99" rx="9" fill="#fff" stroke="#3a3a3a" stroke-width="2.2"/>
  <rect x="5" y="5" width="106" height="93" rx="7" fill="none" stroke="#d8d8d8" stroke-width="1"/>
  <path d="M86 3V100" stroke="#c8c8c8" stroke-width="1"/>
  <rect x="9" y="101" width="20" height="5" fill="#fff" stroke="#3a3a3a" stroke-width="1.5"/>
  <rect x="86" y="101" width="20" height="5" fill="#fff" stroke="#3a3a3a" stroke-width="1.5"/>
  <g fill="#9ab"><circle cx="13" cy="14" r=".8"/><circle cx="13" cy="19" r=".8"/><circle cx="13" cy="24" r=".8"/><circle cx="13" cy="30" r=".8"/><circle cx="17" cy="30" r=".8"/></g>
  <rect x="11.5" y="33" width="14" height="59" fill="#22e02e" stroke="#2f8fb8" stroke-width="1.4"/>
  <rect x="30.5" y="33" width="13.5" height="59" fill="#22e02e" stroke="#3aa94a" stroke-width=".6"/>
  <rect x="49.5" y="33" width="13.5" height="59" fill="#22e02e" stroke="#3aa94a" stroke-width=".6"/>
  <rect x="67.5" y="33" width="13.5" height="59" fill="#22e02e" stroke="#3aa94a" stroke-width=".6"/>
  <text x="100" y="16" font-size="5" font-family="Liberation Sans" font-weight="bold" fill="#333" text-anchor="middle">QNAP</text>
  <rect x="92" y="52" width="16" height="13" fill="none" stroke="#999" stroke-width=".9"/>
  <circle cx="100" cy="58.5" r="3.5" fill="none" stroke="#aaa" stroke-width=".9"/>
  <rect x="92" y="68" width="16" height="13" fill="none" stroke="#999" stroke-width=".9"/>
  <rect x="94.5" y="70.5" width="3" height="8" rx="1.5" fill="none" stroke="#aaa" stroke-width=".8"/>
  <circle cx="103" cy="74.5" r="2.5" fill="none" stroke="#aaa" stroke-width=".8"/>
</svg>
<div class="t" style="left:292.5px;top:712.50px;font-size:15px;color:#222;font-weight:bold;transform:scaleX(0.955)">TS473</div>
<svg class="a" style="left:340.5px;top:714.5px" width="16" height="16" viewBox="0 0 16 16"><circle cx="7" cy="7" r="5.8" fill="none" stroke="#333" stroke-width="1.4"/><path d="M7 4V10M4 7H10M11.2 11.2L14.8 14.8" stroke="#333" stroke-width="1.5"/></svg>
<div class="t" style="left:313.6px;top:730.50px;font-size:11px;color:#555"><span style="color:#3a6aa8">1</span> / 1</div>
<svg class="a" style="left:299px;top:748px" width="17" height="17" viewBox="0 0 15 15"><circle cx="7.5" cy="7.5" r="7.3" fill="#64b23a"/><path d="M3.8 7.6L6.4 10.2L11.2 5.2" fill="none" stroke="#eefae4" stroke-width="1.8"/></svg>
<div class="t" style="left:323.4px;top:747.00px;font-size:10.8px;color:#333">良好</div>
<div class="a" style="left:0px;top:787px;width:1080px;height:3px;background:#fbfbfc"></div>
</body></html>
